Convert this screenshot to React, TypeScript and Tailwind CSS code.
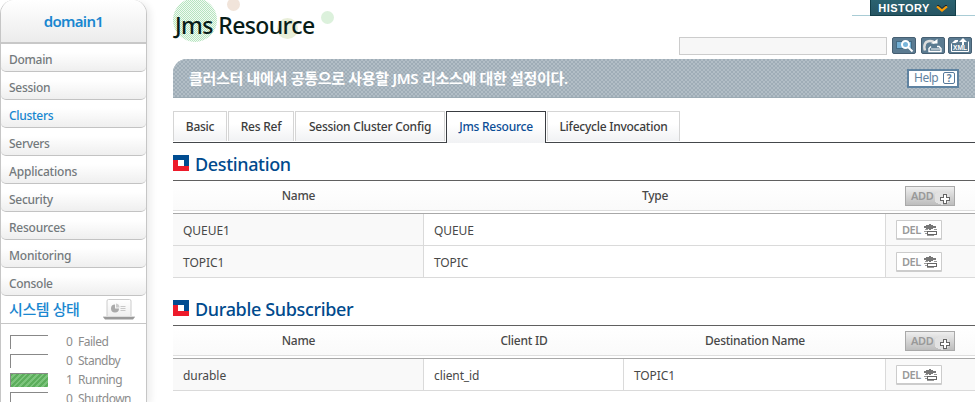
import type { ReactNode } from "react";

const menu = ["Domain", "Session", "Clusters", "Servers", "Applications", "Security", "Resources", "Monitoring", "Console"];

const menuTracking: Record<string, string> = {
  Domain: "tracking-[-0.3px]",
  Applications: "tracking-[-0.2px]",
  Resources: "tracking-[-0.25px]",
  Monitoring: "tracking-[-0.2px]",
};

const statuses = [
  { count: 0, label: "Failed" },
  { count: 0, label: "Standby" },
  { count: 1, label: "Running" },
  { count: 0, label: "Shutdown" },
];

const tabs = [
  { label: "Basic", box: "w-[54px]" },
  { label: "Res Ref", box: "w-[66px]" },
  { label: "Session Cluster Config", box: "w-[150px]" },
  { label: "Jms Resource", box: "w-[100px]" },
  { label: "Lifecycle Invocation", box: "w-[133px]" },
];

function ReportIcon() {
  return (
    <svg width="34" height="24" viewBox="0 0 34 24">
      <defs>
        <linearGradient id="lap" x1="0" y1="0" x2="0" y2="1">
          <stop offset="0" stopColor="#fff" />
          <stop offset="1" stopColor="#eee" />
        </linearGradient>
      </defs>
      <rect x="5" y="1.5" width="24" height="18" rx="1.5" fill="url(#lap)" stroke="#ccc" />
      <path d="M1 19h32l-2 2.500H3z" fill="#999" />
      <path d="M1 18.500h32" stroke="#ddd" />
      <path d="M13 6.500a4 4 0 1 0 4 4h-4z" fill="#aaa" />
      <path d="M14 5.500a4 4 0 0 1 3.500 4H14z" fill="#ccc" />
      <path d="M18.500 8.500h5M18.500 10.500h5M18.500 12.500h5" stroke="#c8c8c8" />
    </svg>
  );
}

function Sidebar() {
  return (
    <aside className="h-[402px] w-[147px] shrink-0 rounded-t-[14px] border-x border-[#c6c6c6] bg-white shadow-[4px_2px_7px_rgba(0,0,0,0.07)]">
      <div className="flex h-11 items-center justify-center rounded-t-[14px] border-b-2 border-[#c8c8c8] bg-linear-to-b from-white to-[#ececec] text-[15px] font-semibold tracking-[-0.7px] text-[#1a87d0]">
        domain1
      </div>
      <nav>
        {menu.map((m) => (
          <div
            key={m}
            className={`flex h-7 items-center rounded-b-[5px] border-b border-[#c3c3c3] bg-linear-to-b from-white from-30% to-[#efefef] pt-[5px] pl-2 text-[12px] font-medium ${menuTracking[m] ?? "tracking-[-0.3px]"} ${m === "Clusters" ? "text-[#1686d0]" : "text-[#73797c]"}`}
          >
            {m}
          </div>
        ))}
      </nav>
      <div className="flex h-7 items-center justify-between border-b border-[#c6c6c6] pr-2.5 pl-2">
        <span className="text-[15px] font-medium tracking-[-0.4px] text-[#1a87d0]">시스템 상태</span>
        <ReportIcon />
      </div>
      <ul className="pt-[8px] pl-[9px]">
        {statuses.map((s) => (
          <li key={s.label} className="flex h-[19px] items-center text-[12px] tracking-[-0.5px] text-[#8c8c8c]">
            <span
              className={`h-[14px] w-[38px] border-t border-l border-[#888] ${s.count ? "bg-[repeating-linear-gradient(135deg,#5cae5c_0_2px,#7cc47c_2px_4px)]" : "bg-white"}`}
            />
            <span className="ml-[18px] w-[7px]">{s.count}</span>
            <span className="ml-[5px]">{s.label}</span>
          </li>
        ))}
      </ul>
    </aside>
  );
}

function HistoryButton() {
  return (
    <div className="absolute top-0 left-[679px] flex w-[123px] items-end">
      <div className="h-[16px] w-[18px] border-b border-[#a9ccd5]" />
      <div className="flex h-4 w-[86px] items-center justify-center gap-[6px] border-x border-b border-[#123f49] bg-linear-to-b from-[#2a6270] to-[#275563]">
        <span className="pt-px font-['Liberation_Sans'] text-[11px] leading-none font-bold tracking-[0.45px] text-white">HISTORY</span>
        <svg width="12" height="8" viewBox="0 0 12 8" fill="none">
          <path d="M1 1.500h2l3 3 3-3h2" stroke="#222" strokeWidth="1" />
          <path d="M1 2.500l5 4 5-4" stroke="#ff9c00" strokeWidth="2.200" />
        </svg>
      </div>
      <div className="h-[16px] flex-1 border-b border-[#a9ccd5]" />
    </div>
  );
}

function ToolButton({ children }: { children: ReactNode }) {
  return (
    <button className="flex h-[17px] w-6 items-center justify-center rounded-[2px] border border-[#465f72] bg-[#5b7b91]">{children}</button>
  );
}

function Toolbar() {
  return (
    <div className="absolute top-[37px] left-[506px] flex items-start">
      <div className="h-[18px] w-[208px] border border-[#ccc] bg-[#f7f7f7]" />
      <div className="ml-[5px] flex">
        <ToolButton>
          <svg width="22" height="15" viewBox="0 0 22 15" className="shrink-0">
            <rect x="3.500" y="3.500" width="15" height="7" fill="#72aed3" stroke="#426a83" />
            <circle cx="12.500" cy="6.500" r="3.500" fill="#78b5da" stroke="#fff" strokeWidth="2" />
            <path d="M15 9l4.500 4.500" stroke="#fff" strokeWidth="2" />
          </svg>
        </ToolButton>
        <div className="ml-[5px]">
          <ToolButton>
            <svg width="22" height="15" viewBox="0 0 22 15" fill="none" className="shrink-0">
              <path d="M3 12.500C1 6 4 3 8 3c3 0 4 1 4.500 2.500" stroke="#ddd" strokeWidth="2.500" />
              <path d="M9 5.500h6.500V1z" fill="#fff" />
              <path d="M9 8.500l-2 2v3h12v-3l-2-2h-2" stroke="#fff" strokeWidth="1.400" />
              <path d="M9 11h9" stroke="#fff" />
            </svg>
          </ToolButton>
        </div>
        <div className="ml-[3px]">
          <ToolButton>
            <svg width="22" height="15" viewBox="0 0 22 15" fill="none" className="shrink-0">
              <path d="M2.500 13.500h17V3.500M2.500 13.500V5.500" stroke="#fff" />
              <path d="M3 5l3-3h3v1.500L6.500 5z" fill="#fff" />
              <path d="M14 0l-4 4h3v3h2V4h3z" fill="#fff" />
              <text x="4" y="12.300" className="fill-white font-['Liberation_Sans'] text-[6.500px] font-bold" textLength="14" lengthAdjust="spacingAndGlyphs">XML</text>
            </svg>
          </ToolButton>
        </div>
      </div>
    </div>
  );
}

function Tabs() {
  return (
    <div className="flex h-8 items-stretch gap-px bg-[linear-gradient(#44474b,#44474b)] bg-[length:100%_1px] bg-bottom bg-no-repeat">
      {tabs.map((t) => {
        const active = t.label === "Jms Resource";
        return (
          <div
            key={t.label}
            className={`${t.box} flex items-center justify-center border-x border-t bg-linear-to-b from-white from-40% to-[#f1f2f4] text-[12px] font-medium tracking-[-0.25px] whitespace-nowrap ${active ? "border-[#393c41] pb-0.5 text-[#0b4d96]" : "mb-0.5 border-[#d5d5d5] text-[#3c3c3c]"}`}
          >
            {t.label}
          </div>
        );
      })}
    </div>
  );
}

function Heading({ children }: { children: ReactNode }) {
  return (
    <h2 className="flex h-6 items-center gap-[6px] text-[18px] font-medium tracking-[-0.35px] text-[#004a8d]">
      <svg width="16" height="16" viewBox="0 0 16 16" shapeRendering="crispEdges" className="-mt-0.5">
        <path d="M0 0h16v11H0z" fill="#004c91" />
        <path d="M0 5h5v6h11v5H0z" fill="#ed1b2b" />
        <path d="M5 5h6v6H5z" fill="#fff" />
      </svg>
      {children}
    </h2>
  );
}

function Layers({ add = false }: { add?: boolean }) {
  return (
    <svg width="16" height="14" viewBox="0 0 16 14" shapeRendering="crispEdges" className="shrink-0">
      {add ? (
        <>
          <path d="M7 0l7 3v8l-7 3-7-3V3z" fill="#e2e2e2" />
          <path d="M8.500 3.500h3v3h3v3h-3v3h-3v-3h-3v-3h3z" fill="#fff" stroke="#666" />
        </>
      ) : (
        <>
          <path d="M7 1l7 3-7 3-7-3z" fill="#777" />
          <path d="M1 6h4v1H2zM0 8h4v1H1zM1 10h3v1H2zM3 12h8v1H4z" fill="#999" />
          <path d="M11 6h3v1h-3z" fill="#999" />
          <path d="M4.500 8.500h9v3h-9z" fill="#fff" stroke="#666" />
        </>
      )}
    </svg>
  );
}

function AddButton() {
  return (
    <button className="flex h-5 w-[50px] items-center justify-between border border-[#a9a9a9] bg-linear-to-b from-[#eee] to-[#bdbdbd] pr-[3px] pl-[5px] text-[11px] font-semibold tracking-[-0.3px] text-[#999]">
      <span className="pt-px">ADD</span>
      <span className="pt-1">
        <Layers add />
      </span>
    </button>
  );
}

function DelButton() {
  return (
    <button className="flex h-5 w-[46px] items-center justify-between rounded-[1px] border border-b-2 border-[#ccc] bg-white pr-[2px] pl-[5px] text-[11px] font-semibold tracking-[-0.5px] text-[#999]">
      <span className="pt-0.5">DEL</span>
      <Layers />
    </button>
  );
}

function Table({ columns, headers, rows }: { columns: string; headers: string[]; rows: string[][] }) {
  return (
    <div className="border-t border-[#606060] text-[12px] text-[#484848]">
      <div className={`grid ${columns} h-[30px] items-center border-b border-[#dedede] bg-linear-to-b from-white to-[#fafafa]`}>
        {headers.map((h) => (
          <div key={h} className="text-center font-medium tracking-[-0.25px]">{h}</div>
        ))}
        <div className="flex pl-[19px]">
          <AddButton />
        </div>
      </div>
      <div className="mt-[2px] border-t border-[#a8a8a8]">
        {rows.map((r) => (
          <div key={r[0]} className={`grid ${columns} h-8 border-b border-[#dadada]`}>
            {r.map((c, i) => (
              <div key={c} className={`flex items-center border-r border-[#dadada] pt-[3px] pl-[10px] ${i === 0 ? "bg-[#f9f9f9] tracking-[-0.05px]" : "tracking-[-0.1px]"}`}>
                {c}
              </div>
            ))}
            <div className="flex items-center bg-[#f9f9f9] pt-px pl-[10px]">
              <DelButton />
            </div>
          </div>
        ))}
      </div>
    </div>
  );
}

export default function App() {
  return (
    <div className="flex h-[402px] w-[975px] overflow-hidden bg-white font-['Noto_Sans','Noto_Sans_CJK_KR',sans-serif]">
      <Sidebar />
      <main className="ml-[26px] w-[802px] shrink-0">
        <header className="relative h-[59px]">
          <div className="absolute -top-0.5 left-0 size-11 rounded-full bg-[repeating-conic-gradient(#b6e3bf_0_25%,#f0fbf2_0_50%)] bg-[length:2px_2px]" />
          <svg className="absolute top-0 left-0" width="170" height="45" viewBox="0 0 170 45">
            <circle cx="60.500" cy="4.500" r="6.500" fill="#f1e4da" />
            <circle cx="114.500" cy="28.500" r="10.500" fill="#e9efd9" />
            <circle cx="154.500" cy="17.500" r="6.500" fill="#dcf1dc" />
          </svg>
          <h1 className="relative pt-[8px] pl-[2px] text-[23px] leading-[34px] font-medium tracking-[-0.6px] text-[#081c18]">Jms Resource</h1>
          <HistoryButton />
          <Toolbar />
        </header>
        <div className="flex h-[39px] items-center justify-between rounded-tl-[14px] border-b border-[#9baab3] bg-[#afbbc3] bg-[repeating-conic-gradient(#9fadb7_0_25%,#b2bec6_0_50%)] bg-[length:4px_4px] pr-4 pl-4">
          <p className="text-[15px] font-semibold tracking-[-0.3px] text-white">클러스터 내에서 공통으로 사용할 JMS 리소스에 대한 설정이다.</p>
          <button className="flex h-[19px] w-[52px] items-center justify-between border-2 border-[#5f83a1] bg-white pr-[2px] pl-[5px] text-[12px] tracking-[-0.5px] text-[#6282a0]">
            Help
            <span className="flex size-3 items-center justify-center rounded-[2px] border border-[#55789a] text-[10px] leading-none font-bold">?</span>
          </button>
        </div>
        <div className="pt-[13px]">
          <Tabs />
        </div>
        <section className="pt-[9px]">
          <Heading>Destination</Heading>
          <div className="pt-1">
            <Table
              columns="grid-cols-[251px_462px_89px]"
              headers={["Name", "Type"]}
              rows={[["QUEUE1", "QUEUE"], ["TOPIC1", "TOPIC"]]}
            />
          </div>
        </section>
        <section className="pt-[19px]">
          <Heading>Durable Subscriber</Heading>
          <div className="pt-1">
            <Table
              columns="grid-cols-[251px_200px_262px_89px]"
              headers={["Name", "Client ID", "Destination Name"]}
              rows={[["durable", "client_id", "TOPIC1"]]}
            />
          </div>
        </section>
      </main>
    </div>
  );
}
